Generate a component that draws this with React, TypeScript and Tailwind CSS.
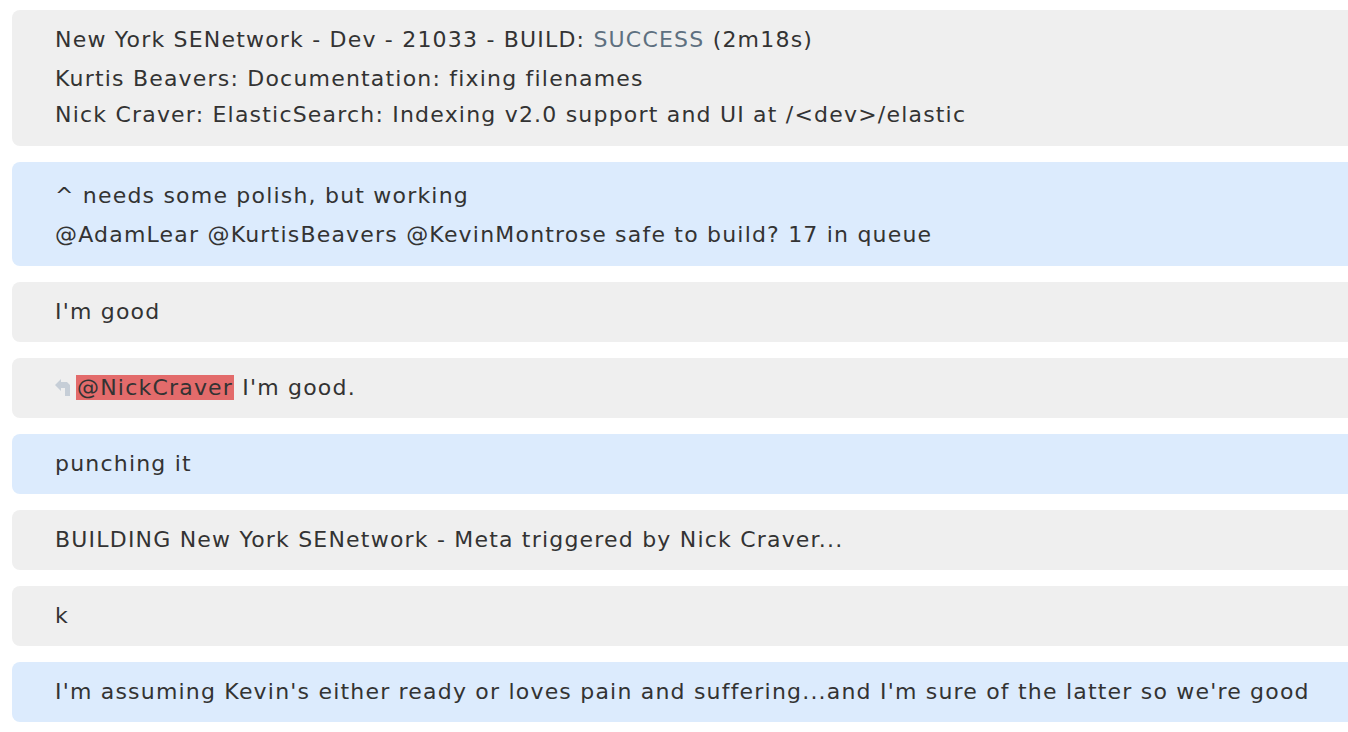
const gray = 'bg-[#efefef]'
const blue = 'bg-[#dcebfd]'

function ReplyIcon() {
  return (
    <svg width="16" height="17" viewBox="0 0 16 17" className="inline-block mr-[5px] align-[-1px]">
      <path d="M0 6 L6 0 L6 3 L12 3 L15 6 L15 17 L10 17 L10 9 L6 9 L6 12 Z" fill="#c6ced7" />
    </svg>
  )
}

function Box({ tone, className, children }: { tone: string; className?: string; children: React.ReactNode }) {
  return (
    <div className={`${tone} rounded-l-[8px] ml-[12px] -mr-[20px] pl-[43px] pr-4 ${className ?? 'h-[60px] pt-[12px]'}`}>
      {children}
    </div>
  )
}

export default function App() {
  return (
    <div
      className="w-[1348px] h-[732px] overflow-hidden bg-white text-[#333333] text-[22px] leading-[36px] tracking-[1.2px] pt-[10px] flex flex-col gap-[16px] whitespace-nowrap"
      style={{ fontFamily: '"DejaVu Sans", Verdana, sans-serif' }}
    >
      <Box tone={gray} className="pt-[12px] pb-[13px]">
        <div className="mb-[3px]">
          New York SENetwork - Dev - 21033 - BUILD: <span className="text-[#5e7080]">SUCCESS</span> (2m18s)
        </div>
        <div>Kurtis Beavers: Documentation: fixing filenames</div>
        <div>Nick Craver: ElasticSearch: Indexing v2.0 support and UI at /&lt;dev&gt;/elastic</div>
      </Box>
      <Box tone={blue} className="pt-[16px] pb-[13px]">
        <div className="mb-[3px]">^ needs some polish, but working</div>
        <div>@AdamLear @KurtisBeavers @KevinMontrose safe to build? 17 in queue</div>
      </Box>
      <Box tone={gray}>
        <div>I'm good</div>
      </Box>
      <Box tone={gray}>
        <div>
          <ReplyIcon />
          <span className="bg-[#e36b6b] pl-[1px] pr-[1px]">@NickCraver</span> I'm good.
        </div>
      </Box>
      <Box tone={blue}>
        <div>punching it</div>
      </Box>
      <Box tone={gray}>
        <div>BUILDING New York SENetwork - Meta triggered by Nick Craver...</div>
      </Box>
      <Box tone={gray}>
        <div>k</div>
      </Box>
      <Box tone={blue}>
        <div>I'm assuming Kevin's either ready or loves pain and suffering...and I'm sure of the latter so we're good</div>
      </Box>
    </div>
  )
}
